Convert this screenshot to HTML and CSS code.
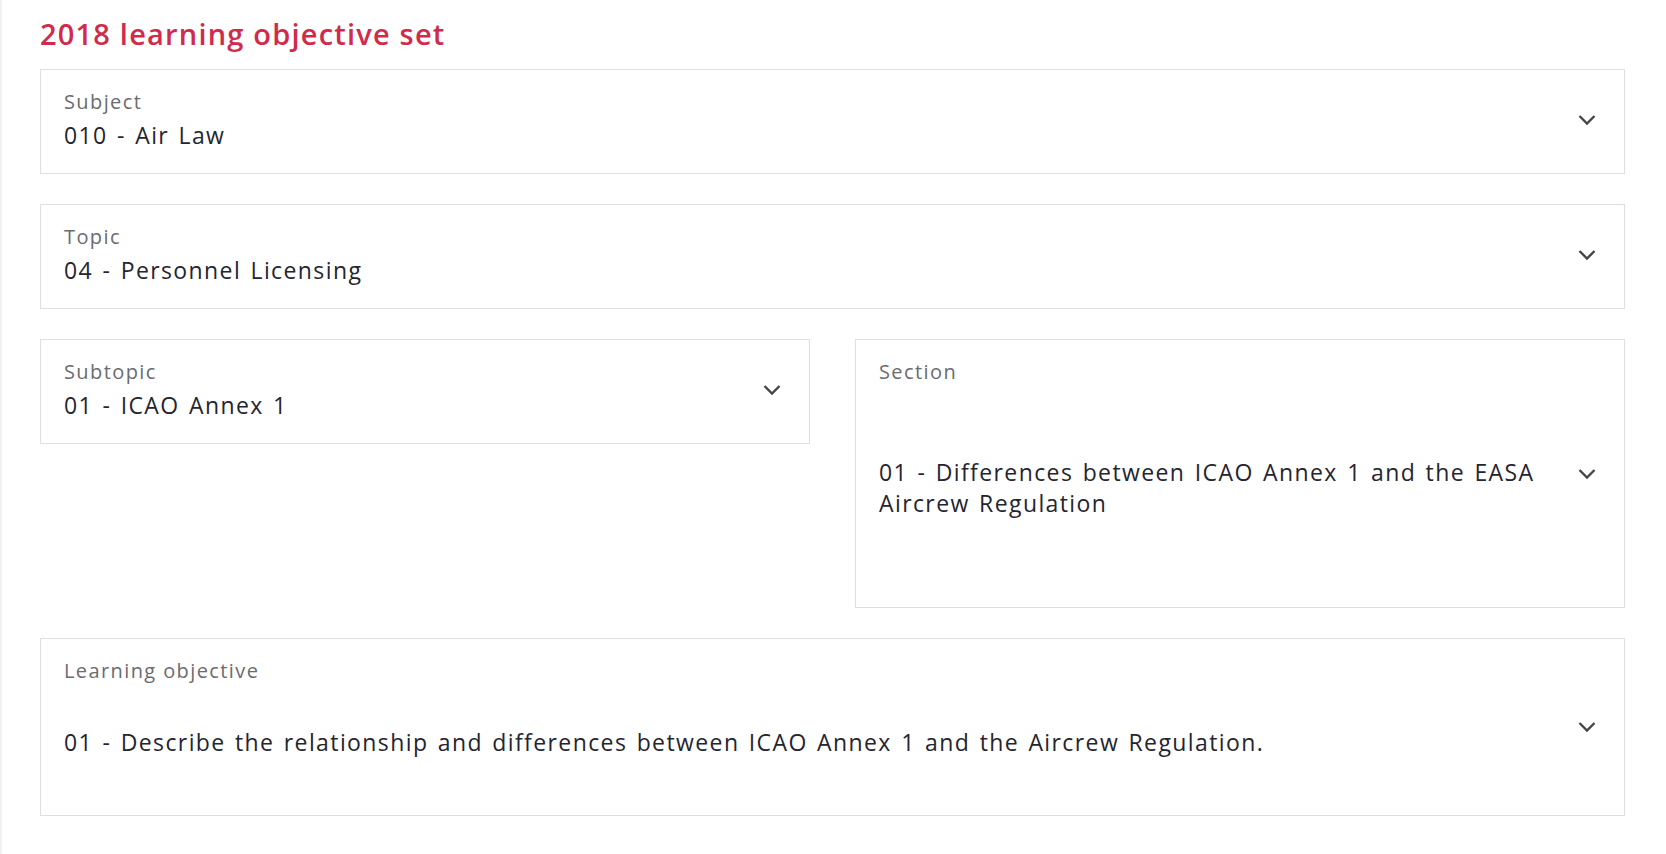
FILE: index.html
```html
<!DOCTYPE html>
<html lang="en">

<head>
    <meta charset="UTF-8">
    <title>2018 learning objective set</title>
    <link rel="stylesheet" href="styles.css">
</head>

<body>
    <main class="side">
        <h1 class="titel">2018 learning objective set</h1>

        <div class="felter">
            <div class="felt bred">
                <div class="tekst">
                    <p class="label">Subject</p>
                    <p class="vaerdi">010 - Air Law</p>
                </div>
                <svg class="pil" viewBox="0 0 20 12"><polyline points="2.5,2 10,9.5 17.5,2" /></svg>
            </div>

            <div class="felt bred">
                <div class="tekst">
                    <p class="label">Topic</p>
                    <p class="vaerdi">04 - Personnel Licensing</p>
                </div>
                <svg class="pil" viewBox="0 0 20 12"><polyline points="2.5,2 10,9.5 17.5,2" /></svg>
            </div>

            <div class="felt">
                <div class="tekst">
                    <p class="label">Subtopic</p>
                    <p class="vaerdi">01 - ICAO Annex 1</p>
                </div>
                <svg class="pil" viewBox="0 0 20 12"><polyline points="2.5,2 10,9.5 17.5,2" /></svg>
            </div>

            <div class="felt sektion">
                <div class="tekst">
                    <p class="label">Section</p>
                    <p class="vaerdi">01 - Differences between ICAO Annex 1 and the EASA Aircrew Regulation</p>
                </div>
                <svg class="pil" viewBox="0 0 20 12"><polyline points="2.5,2 10,9.5 17.5,2" /></svg>
            </div>

            <div class="felt bred maal">
                <div class="tekst">
                    <p class="label">Learning objective</p>
                    <p class="vaerdi">01 - Describe the relationship and differences between ICAO Annex 1 and the Aircrew Regulation.</p>
                </div>
                <svg class="pil" viewBox="0 0 20 12"><polyline points="2.5,2 10,9.5 17.5,2" /></svg>
            </div>
        </div>
    </main>
</body></html>
```

FILE: styles.css
```css
body {
    margin: 0;
    background-color: #fff;
    font-family: "Open Sans", "Liberation Sans", sans-serif;
    color: #25252f;
}

p {
    margin: 0;
}

.side {
    min-height: 100vh;
    box-sizing: border-box;
    border-left: 2px solid #f0f0f0;
    padding: 15px 41px 0 38px;
}

.titel {
    margin: 0 0 16px 0;
    font-size: 29px;
    line-height: 38px;
    font-weight: 600;
    color: #d02a4c;
    letter-spacing: 1.2px;
}

.felter {
    display: grid;
    grid-template-columns: 1fr 1fr;
    column-gap: 45px;
    row-gap: 30px;
    align-items: start;
}

.felt {
    display: flex;
    align-items: center;
    border: 1px solid #dcdfe3;
    padding: 20px 27px 23px 23px;
}

.bred {
    grid-column: 1 / 3;
}

.tekst {
    flex: 1;
    padding-right: 20px;
}

.label {
    font-size: 20px;
    line-height: 24px;
    color: #6b6b70;
    letter-spacing: 1.4px;
}

.vaerdi {
    margin-top: 6px;
    font-size: 23px;
    line-height: 30px;
    letter-spacing: 1.4px;
    word-spacing: 2px;
}

/* section og learning objective er hoejere felter */
.sektion,
.maal {
    padding-bottom: 20px;
}

.sektion .tekst {
    padding-bottom: 68px;
}

.sektion .vaerdi {
    margin-top: 73px;
    line-height: 31px;
}

.maal .tekst {
    padding-bottom: 38px;
}

.maal .vaerdi {
    margin-top: 44px;
}

.pil {
    width: 20px;
    height: 12px;
    flex-shrink: 0;
    fill: none;
    stroke: #45454c;
    stroke-width: 2.4;
}
```
